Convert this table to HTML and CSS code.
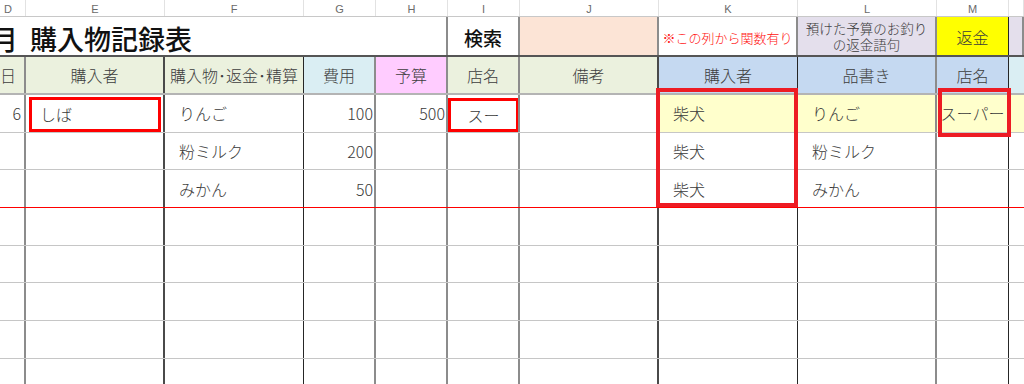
FILE: index.html
```html
<!DOCTYPE html>
<html lang="ja">
<head>
    <meta charset="utf-8">
    <title>購入物記録表</title>
    <link rel="stylesheet" href="styles.css">
</head>
<body>
    <div class="sheet">
        <!-- column letters -->
        <div class="row col-letters">
            <div class="cell">D</div>
            <div class="cell">E</div>
            <div class="cell">F</div>
            <div class="cell">G</div>
            <div class="cell">H</div>
            <div class="cell">I</div>
            <div class="cell">J</div>
            <div class="cell">K</div>
            <div class="cell">L</div>
            <div class="cell">M</div>
            <div class="cell"></div>
        </div>

        <!-- title row -->
        <div class="row title-row">
            <div class="cell title-cell"><span class="month">月</span><span class="title">購入物記録表</span></div>
            <div class="cell search">検索</div>
            <div class="cell bg-peach"></div>
            <div class="cell note">※この列から関数有り</div>
            <div class="cell change-label bg-lavender"><span>預けた予算のお釣り</span><span>の返金語句</span></div>
            <div class="cell refund">返金</div>
            <div class="cell bg-lavender"></div>
        </div>

        <!-- field names -->
        <div class="row head-row lined">
            <div class="cell day bg-green">日</div>
            <div class="cell bg-green">購入者</div>
            <div class="cell bg-green">購入物･返金･精算</div>
            <div class="cell bg-cyan">費用</div>
            <div class="cell bg-pink">予算</div>
            <div class="cell bg-green">店名</div>
            <div class="cell bg-green">備考</div>
            <div class="cell bg-blue">購入者</div>
            <div class="cell bg-blue">品書き</div>
            <div class="cell bg-blue">店名</div>
            <div class="cell bg-cyan"></div>
        </div>

        <!-- records -->
        <div class="row data-row lined">
            <div class="cell num day-num">6</div>
            <div class="cell"><span class="picked">しば</span></div>
            <div class="cell text">りんご</div>
            <div class="cell num">100</div>
            <div class="cell num">500</div>
            <div class="cell"><span class="picked shop">スー</span></div>
            <div class="cell"></div>
            <div class="cell text hit">柴犬</div>
            <div class="cell text hit">りんご</div>
            <div class="cell center hit">スーパー</div>
            <div class="cell hit"></div>
        </div>
        <div class="row data-row lined">
            <div class="cell"></div>
            <div class="cell"></div>
            <div class="cell text">粉ミルク</div>
            <div class="cell num">200</div>
            <div class="cell"></div>
            <div class="cell"></div>
            <div class="cell"></div>
            <div class="cell text">柴犬</div>
            <div class="cell text">粉ミルク</div>
            <div class="cell"></div>
            <div class="cell"></div>
        </div>
        <div class="row data-row lined cut">
            <div class="cell"></div>
            <div class="cell"></div>
            <div class="cell text">みかん</div>
            <div class="cell num">50</div>
            <div class="cell"></div>
            <div class="cell"></div>
            <div class="cell"></div>
            <div class="cell text">柴犬</div>
            <div class="cell text">みかん</div>
            <div class="cell"></div>
            <div class="cell"></div>
        </div>
        <div class="row data-row lined">
            <div class="cell"></div><div class="cell"></div><div class="cell"></div><div class="cell"></div>
            <div class="cell"></div><div class="cell"></div><div class="cell"></div><div class="cell"></div>
            <div class="cell"></div><div class="cell"></div><div class="cell"></div>
        </div>
        <div class="row data-row lined">
            <div class="cell"></div><div class="cell"></div><div class="cell"></div><div class="cell"></div>
            <div class="cell"></div><div class="cell"></div><div class="cell"></div><div class="cell"></div>
            <div class="cell"></div><div class="cell"></div><div class="cell"></div>
        </div>
        <div class="row data-row lined">
            <div class="cell"></div><div class="cell"></div><div class="cell"></div><div class="cell"></div>
            <div class="cell"></div><div class="cell"></div><div class="cell"></div><div class="cell"></div>
            <div class="cell"></div><div class="cell"></div><div class="cell"></div>
        </div>
        <div class="row data-row lined">
            <div class="cell"></div><div class="cell"></div><div class="cell"></div><div class="cell"></div>
            <div class="cell"></div><div class="cell"></div><div class="cell"></div><div class="cell"></div>
            <div class="cell"></div><div class="cell"></div><div class="cell"></div>
        </div>
        <div class="row data-row lined">
            <div class="cell"></div><div class="cell"></div><div class="cell"></div><div class="cell"></div>
            <div class="cell"></div><div class="cell"></div><div class="cell"></div><div class="cell"></div>
            <div class="cell"></div><div class="cell"></div><div class="cell"></div>
        </div>

        <!-- pen marks drawn over the lookup columns -->
        <div class="pen-mark pen-buyer"></div>
        <div class="pen-mark pen-shop"></div>
    </div>
</body>
</html>
```

FILE: styles.css
```css
:root {
    --cols: 26px 139px 139px 72px 72px 72px 139px 139px 139px 72px 1fr;
    --ink: #3a3a3a;
    --head-green: #ebf1de;
    --head-blue: #c5d9f1;
    --head-cyan: #daeef3;
    --head-pink: #ffccff;
    --lavender: #e4dfec;
    --peach: #fce4d6;
    --hit-yellow: #ffffcc;
    --line-grey: 2px solid #8c8c8c;
    --line-dark: 2px solid #4a4a4a;
    --line-thin: 1px solid #262626;
}

html,
body {
    margin: 0;
    background: #ffffff;
}

body {
    width: 1024px;
    height: 384px;
    overflow: hidden;
    font-family: "Noto Sans CJK JP", "Noto Sans", sans-serif;
    font-size: 16px;
    font-weight: 300;
    color: var(--ink);
}

.sheet {
    position: relative;
    display: flex;
    flex-direction: column;
}

.row {
    display: grid;
    grid-template-columns: var(--cols);
    box-sizing: border-box;
    flex-shrink: 0;
}

.cell {
    box-sizing: border-box;
    display: flex;
    align-items: center;
    min-width: 0;
    overflow: hidden;
    white-space: nowrap;
}

/* column letters */
.col-letters {
    height: 17px;
    border-bottom: 1px solid #c8c8c8;
}

.col-letters .cell {
    justify-content: center;
    align-items: flex-end;
    overflow: visible;
    line-height: 13px;
    font-family: "Liberation Sans", sans-serif;
    font-size: 11px;
    font-weight: 400;
    color: #6a6a6a;
    border-right: 1px solid #e2e2e2;
}

.col-letters .cell:first-child {
    justify-content: flex-start;
    padding-left: 4px;
}

/* title row */
.title-row {
    height: 40px;
    border-bottom: 2px solid #555555;
}

.title-row .cell {
    justify-content: center;
    border-right: var(--line-grey);
}

.title-cell {
    grid-column: 1 / 6;
    justify-content: flex-start !important;
    padding-top: 5px;
    font-size: 27px;
    font-weight: 500;
    color: #111111;
}

.month {
    margin-left: -9px;
}

.title {
    margin-left: 12px;
}

.search {
    font-size: 19px;
    font-weight: 500;
    color: #111111;
    padding-top: 3px;
}

.note {
    font-size: 13px;
    color: #ff1111;
    padding-top: 2px;
}

.change-label {
    flex-direction: column;
    font-size: 13.5px;
    line-height: 16px;
    color: #3a3a3a;
}

.refund {
    background: #ffff00;
    color: #3a3a3a;
    padding-top: 2px;
    border-right: var(--line-thin) !important;
}

/* shared column lines for field names and records */
.lined > .cell {
    border-right: var(--line-grey);
}

.lined > .cell:nth-child(2),
.lined > .cell:nth-child(7) {
    border-right: var(--line-dark);
}

.lined > .cell:nth-child(3),
.lined > .cell:nth-child(8),
.lined > .cell:nth-child(10) {
    border-right: var(--line-thin);
}

.lined > .cell:last-child {
    border-right: none;
}

.head-row {
    height: 38px;
    border-bottom: 2px solid #b4b4b4;
}

.head-row .cell {
    justify-content: center;
    color: #3d3d3d;
}

.head-row .day {
    justify-content: flex-end;
    padding-right: 8px;
}

.bg-green { background: var(--head-green); }
.bg-blue { background: var(--head-blue); }
.bg-cyan { background: var(--head-cyan); }
.bg-pink { background: var(--head-pink); }
.bg-lavender { background: var(--lavender); }
.bg-peach { background: var(--peach); }

.data-row {
    height: 37.67px;
    border-bottom: 1px solid #c6c6c6;
}

.data-row.cut {
    border-bottom: 1px solid #ff0000;
}

.text {
    padding-left: 14px;
}

.num {
    justify-content: flex-end;
    padding-right: 1px;
}

.day-num {
    padding-right: 3px;
}

.center {
    justify-content: center;
}

.hit {
    background: var(--hit-yellow);
}

/* selected input cells */
.picked {
    align-self: stretch;
    flex: 1;
    display: flex;
    align-items: center;
    margin: 2px 2px 0 3px;
    padding-left: 8px;
    border: 3px solid #ff0000;
    background: #ffffff;
}

.picked.shop {
    justify-content: center;
    padding-left: 0;
    margin: 3px -1px 0 0;
}

.pen-mark {
    position: absolute;
    box-sizing: border-box;
    border: 4px solid #ed1c24;
    pointer-events: none;
}

.pen-buyer {
    left: 656px;
    top: 88px;
    width: 142px;
    height: 119px;
}

.pen-shop {
    left: 938px;
    top: 88px;
    width: 73px;
    height: 49px;
}
```
